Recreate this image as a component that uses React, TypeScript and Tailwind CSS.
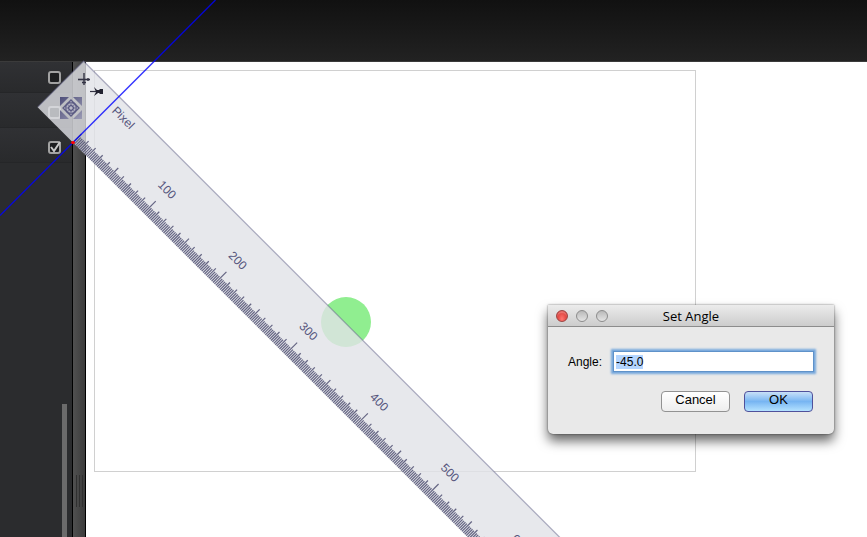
import React from "react";

const ticks = Array.from({ length: 360 }, (_, i) => i * 2);
const tickLength = (v: number) => (v % 100 === 0 && v > 0 ? 17 : v % 50 === 0 && v > 0 ? 14 : v % 10 === 0 ? 12 : 9);
const labels = [100, 200, 300, 400, 500, 600];

function Ruler() {
  return (
    <svg className="pointer-events-none absolute inset-0 h-full w-full" aria-label="Pixel ruler">
      <defs>
        <linearGradient id="corner" x1="0" y1="0" x2="1" y2="1">
          <stop offset="0" stopColor="#4f4f7a" />
          <stop offset="1" stopColor="#9a9ab4" />
        </linearGradient>
      </defs>
      <g transform="translate(73 142.5) rotate(45)">
        <rect x="-50" y="-65" width="900" height="65" fill="#e1e2e7" fillOpacity="0.8" />
        <path d="M-50 0V-65H850" fill="none" stroke="#66668c" strokeOpacity="0.5" strokeWidth="1.3" />
        {ticks.map((v) => (
          <line key={v} x1={v} x2={v} y1="0" y2={-tickLength(v)} stroke="#4c4c70" strokeWidth="1.2" strokeOpacity="0.85" />
        ))}
        <g fill="#55557c" fontFamily="Liberation Sans, Arial, sans-serif" fontSize="12">
          <text x="5" y="-49">Pixel</text>
          {labels.map((v) => (
            <text key={v} x={v} y="-29" textAnchor="middle">{v}</text>
          ))}
        </g>
      </g>
      <g transform="translate(71 108)" fill="none" stroke="#5c5c84" strokeWidth="1.3">
        <path d="M-11-11H-2L-11-2ZM11-11V-2L2-11ZM-11 11V2L-2 11ZM11 11H2L11 2Z" fill="url(#corner)" stroke="none" />
        <path d="M0-8 8 0 0 8-8 0Z" fill="#b5b5c4" />
        <path d="M0-5C3-6 6-3 5 0C6 3 3 6 0 5C-3 6-6 3-5 0C-6-3-3-6 0-5Z" />
        <path d="M-4-4 4 4M4-4-4 4" strokeOpacity="0.5" />
        <path d="M0-3 3 0 0 3-3 0Z" fill="#b9b9c8" />
      </g>
      <path d="M78 79.5H90" stroke="#333344" strokeWidth="1.6" fill="none" />
      <path d="M84 73V85M82 82.5H86M88 78V81" stroke="#333344" strokeWidth="1.4" fill="none" />
      <path d="M90 91.5H96" stroke="#333344" strokeWidth="1.2" />
      <path d="M94 87L97 90H99L100 89H103V94H100L99 93H98L94 96L96 92Z" fill="#222230" />
      <path d="M0 215.5 215.5 0" stroke="#0000ff" strokeOpacity="0.8" strokeWidth="1.4" />
      <ellipse cx="73" cy="142.5" rx="2" ry="1.5" fill="#ff0000" />
    </svg>
  );
}

function PanelRow({ label, checked, first }: { label: string; checked?: boolean; first?: boolean }) {
  return (
    <div className={`flex ${first ? "h-[31px]" : "h-[35px]"} items-end justify-end border-b border-[#252628] bg-linear-to-b from-[#303134] to-[#292a2c] pr-[11px] pb-2`}>
      <label className="relative flex size-[13px]">
        <input type="checkbox" aria-label={label} defaultChecked={checked} className="size-[13px] appearance-none rounded-[3px] border-2 border-[#a2a2a2] bg-[#1d1e20]" />
        {checked && (
          <svg className="pointer-events-none absolute inset-0 overflow-visible" viewBox="0 0 13 13" fill="none">
            <path d="M3 6L6 10L12 1" stroke="#c8c8c8" strokeWidth="2" />
          </svg>
        )}
      </label>
    </div>
  );
}

function Dialog() {
  return (
    <form
      role="dialog"
      aria-label="Set Angle"
      onSubmit={(e) => e.preventDefault()}
      className="absolute top-[305px] left-[548px] w-[286px] rounded-b-[5px] bg-[#e9e9e9] text-black shadow-[0_7px_12px_rgba(0,0,0,0.6),0_0_2px_rgba(0,0,0,0.6)]"
    >
      <header className="relative flex h-[22px] items-center justify-center border-b border-[#8c8c8c] bg-linear-to-b from-[#ececec] to-[#cccccc]">
        <div className="absolute left-2 flex gap-2">
          <button type="button" aria-label="Close" className="size-3 rounded-full border border-[#9c4442] bg-radial-[at_50%_80%] from-[#ff7771] to-[#cf2823] shadow-[inset_0_2px_1px_rgba(255,255,255,0.25)]" />
          <button type="button" aria-label="Minimize" className="size-3 rounded-full border border-[#8c8c8c] bg-linear-to-b from-[#b9b9b9] to-[#e5e5e5]" />
          <button type="button" aria-label="Zoom" className="size-3 rounded-full border border-[#8c8c8c] bg-linear-to-b from-[#b9b9b9] to-[#e5e5e5]" />
        </div>
        <h1 className="font-['Open_Sans','Noto_Sans',sans-serif] text-[13px] leading-4">Set Angle</h1>
      </header>
      <div className="px-5 pt-6 pb-[22px] font-['Liberation_Sans',Arial,sans-serif]">
        <div className="flex items-center gap-[11px]">
          <label htmlFor="angle" className="text-xs">Angle:</label>
          <input
            id="angle"
            defaultValue="-45.0"
            autoFocus
            onFocus={(e) => e.currentTarget.select()}
            className="h-[21px] min-w-0 flex-1 border border-[#5f92c9] bg-white px-[2px] text-xs shadow-[0_0_2px_2px_#75a7dc] outline-none selection:bg-[#b4d5ff] selection:text-black"
          />
        </div>
        <div className="mt-[19px] flex justify-end gap-[14px] pr-px">
          <button type="button" className="flex h-[21px] w-[69px] justify-center rounded-[4px] border border-[#929292] bg-linear-to-b from-white to-[#eeeeee] text-[13px] leading-4">Cancel</button>
          <button type="submit" className="flex h-[21px] w-[69px] justify-center rounded-[4px] border border-[#50519b] bg-linear-to-b from-[#c9e0f7] via-[#77b5f2] to-[#b4e2ff] text-[13px] leading-4">OK</button>
        </div>
      </div>
    </form>
  );
}

export default function App() {
  return (
    <main className="relative flex h-screen flex-col overflow-hidden bg-white">
      <header className="h-[62px] shrink-0 border-b border-[#3b3b3b] bg-linear-to-b from-[#111] to-[#222]" />
      <div className="flex min-h-0 flex-1">
        <aside className="relative w-[72px] bg-[#2b2c2e]">
          <PanelRow label="Layer 1" first />
          <PanelRow label="Layer 2" />
          <PanelRow label="Layer 3" checked />
          <div className="absolute right-[5px] bottom-0 h-[133px] w-[5px] bg-[#6b6b6b]" />
        </aside>
        <div className="flex w-[14px] flex-col items-center justify-end border-x border-black bg-linear-to-r from-[#505050] to-[#3c3c3c] pb-[30px]">
          <div className="flex h-[32px] gap-[2px]">
            <span className="w-px bg-[#303030]" />
            <span className="w-px bg-[#303030]" />
            <span className="w-px bg-[#303030]" />
          </div>
        </div>
        <section className="flex-1 pt-2 pl-2">
          <div className="h-[402px] w-[602px] border border-[#d0d0d0] pt-[226px] pl-[226px]">
            <div className="size-[50px] rounded-full bg-[#90ee90]" />
          </div>
        </section>
      </div>
      <Ruler />
      <Dialog />
    </main>
  );
}
